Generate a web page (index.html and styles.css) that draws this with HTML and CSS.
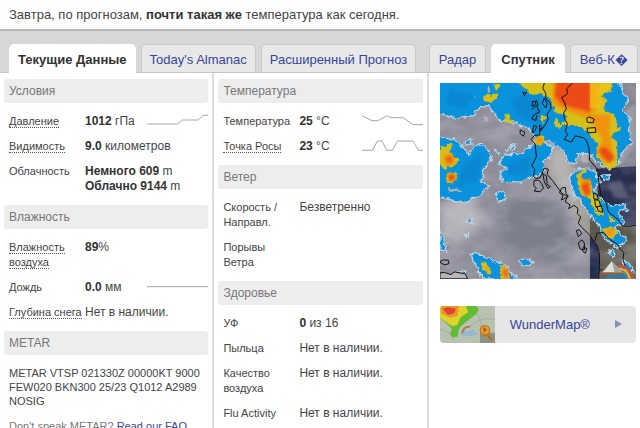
FILE: index.html
```html
<!DOCTYPE html>
<html lang="ru">
  <head>
    <meta charset="UTF-8" />
    <meta name="viewport" content="width=device-width, initial-scale=1.0" />
    <title>Погода</title>
    <link rel="stylesheet" href="styles.css">
  </head>
  <body>
    <p class="summary">Завтра, по прогнозам, <b>почти такая же</b> температура как сегодня.</p>

    <div class="weather">
      <!-- Текущие данные -->
      <section class="main">
        <nav class="tabs">
          <a href="#current" class="tab active">Текущие Данные</a>
          <a href="#almanac" class="tab">Today's Almanac</a>
          <a href="#forecast" class="tab">Расширенный Прогноз</a>
        </nav>

        <div class="columns" id="current">
          <div class="column">
            <h2>Условия</h2>
            <table>
              <tr>
                <th><span class="term">Давление</span></th>
                <td><b>1012</b> гПа</td>
                <td class="chart"><svg class="spark" viewBox="0 0 184 36"><path d="M0 30H92L107 18H154L169 4H184" /></svg></td>
              </tr>
              <tr>
                <th><span class="term">Видимость</span></th>
                <td colspan="2"><b>9.0</b> километров</td>
              </tr>
              <tr>
                <th>Облачность</th>
                <td colspan="2"><b>Немного 609</b> m<br><b>Облачно 9144</b> m</td>
              </tr>
            </table>

            <h2>Влажность</h2>
            <table>
              <tr>
                <th><span class="term">Влажность<br>воздуха</span></th>
                <td><b>89</b>%</td>
                <td class="chart"></td>
              </tr>
              <tr>
                <th>Дождь</th>
                <td><b>0.0</b> мм</td>
                <td class="chart"><svg class="spark" viewBox="0 0 184 36"><path d="M0 20H184" /></svg></td>
              </tr>
              <tr>
                <th><span class="term">Глубина снега</span></th>
                <td colspan="2">Нет в наличии.</td>
              </tr>
            </table>

            <h2>METAR</h2>
            <p class="metar">METAR VTSP 021330Z 00000KT 9000 FEW020 BKN300 25/23 Q1012 A2989 NOSIG</p>
            <p class="faq">Don't speak METAR? <a href="#faq">Read our FAQ</a></p>
          </div>

          <div class="column">
            <h2>Температура</h2>
            <table>
              <tr>
                <th>Температура</th>
                <td><b>25</b> °C</td>
                <td class="chart"><svg class="spark" viewBox="0 0 184 36"><path d="M0 5L30 20H48L76 5L88 11H124L154 32H184" /></svg></td>
              </tr>
              <tr>
                <th><span class="term">Точка Росы</span></th>
                <td><b>23</b> °C</td>
                <td class="chart"><svg class="spark" viewBox="0 0 184 36"><path d="M0 34H32L46 6H60L75 34H92L107 6H154L170 34H184" /></svg></td>
              </tr>
            </table>

            <h2>Ветер</h2>
            <table>
              <tr>
                <th>Скорость /<br>Направл.</th>
                <td colspan="2">Безветренно</td>
              </tr>
              <tr>
                <th>Порывы<br>Ветра</th>
                <td></td>
                <td class="chart"></td>
              </tr>
            </table>

            <h2>Здоровье</h2>
            <table>
              <tr>
                <th>УФ</th>
                <td><b>0</b> из 16</td>
                <td class="chart"></td>
              </tr>
              <tr>
                <th>Пыльца</th>
                <td colspan="2">Нет в наличии.</td>
              </tr>
              <tr>
                <th>Качество<br>воздуха</th>
                <td colspan="2">Нет в наличии.</td>
              </tr>
              <tr>
                <th>Flu Activity</th>
                <td colspan="2">Нет в наличии.</td>
              </tr>
            </table>
          </div>
        </div>
      </section>

      <!-- Карты -->
      <section class="side">
        <nav class="tabs">
          <a href="#radar" class="tab">Радар</a>
          <a href="#satellite" class="tab active">Спутник</a>
          <a href="#webcam" class="tab">Веб-К&#xFFFD;</a>
        </nav>

        <div class="maps" id="satellite">
          <svg class="satellite" viewBox="11 10 590 589" role="img" aria-label="Спутник">
            <defs>
              <filter id="rough" x="-5%" y="-5%" width="110%" height="110%" color-interpolation-filters="sRGB">
                <feTurbulence type="fractalNoise" baseFrequency="0.06" numOctaves="2" seed="4" />
                <feDisplacementMap in="SourceGraphic" scale="20" xChannelSelector="R" yChannelSelector="G" />
              </filter>
              <filter id="haze" x="0" y="0" width="100%" height="100%">
                <feTurbulence type="fractalNoise" baseFrequency="0.009 0.016" numOctaves="4" seed="8" />
                <feColorMatrix values="0 0 0 0 0.86  0 0 0 0 0.86  0 0 0 0 0.88  2.4 0 0 0 -1" />
              </filter>
              <filter id="soft"><feGaussianBlur stdDeviation="14" /></filter>
              <filter id="glow"><feGaussianBlur stdDeviation="4" /></filter>
            </defs>

            <!-- Море, суша и облачность -->
            <rect x="11" y="10" width="590" height="589" fill="#8e8e9b" />
            <g filter="url(#soft)">
              <path fill="#7e7f8d" d="M180 370L340 340L430 470L400 560L200 500Z" />
              <path fill="#b6b4b0" d="M330 270L360 180L400 240L420 300L460 400V470L400 360Z" />
              <path fill="#b2b1b8" d="M11 380L110 350L140 440L60 500L11 470Z" />
            </g>
            <path fill="#9c9a92" d="M395 375L462 345V475L430 445Z" opacity=".7" />
            <path fill="#838491" d="M462 10H601V290H462Z" />
            <path fill="#292f4f" d="M480 268L601 260V440L540 437L490 390Z" />
            <path fill="#5b5950" d="M462 375L500 405L560 440L601 435V599H488V520L462 478Z" />
            <path fill="#252d50" d="M462 474L483 498L491 530L488 599H462Z" />
            <rect x="11" y="10" width="590" height="589" filter="url(#haze)" opacity=".26" />
            <path fill="#9a9ba6" d="M560 100L601 70V190L555 260L545 240L575 170Z" filter="url(#glow)" />
            <path fill="#6a6d83" d="M515 315L555 300L580 360L535 350Z" filter="url(#glow)" opacity=".6" />

            <!-- Холодные облака -->
            <g filter="url(#rough)" fill="#0993dc" stroke="#c3d3e2" stroke-width="4">
              <path d="M0 0H545L560 35L575 60L560 95L583 115L578 150L588 190L565 210L545 258L515 267L480 245L462 228L428 222L424 250L400 255L385 215L340 182L320 190L355 205L325 250L327 275L300 290L250 308L200 305L192 280L212 268L190 250L205 228L255 220L282 200L295 188L292 168L278 144L235 132L190 120L150 78L130 82L112 105L60 118L0 102Z" />
              <path d="M0 175L50 178L80 200L95 225L125 192L155 210L168 240L145 268L135 300L158 320L128 352L80 370L0 350Z" />
              <path d="M400 295L415 270L445 265L480 275L490 310L470 325L495 360L525 380L560 375L575 388L545 400L565 430L535 445L575 485L545 505L500 475L490 442L462 408L435 365L415 350Z" />
              <path d="M85 185L103 178L107 193L90 198ZM172 213L192 214L186 226ZM205 212L216 205L214 218ZM222 202L240 196L231 210ZM178 345L200 336L210 356L190 368ZM92 425L110 415L106 432ZM82 462L97 458L93 473ZM11 455L26 480L31 518L11 510Z" />
              <path d="M104 522L132 525L152 540L192 550L211 560L240 599H140L119 558ZM250 546L268 537L290 552L275 560L258 556ZM62 576L88 572L90 588ZM498 287L520 286L520 301L503 299ZM519 513L532 507L538 531L526 534ZM562 545L583 555L595 580L570 575Z" />
            </g>
            <g filter="url(#rough)" fill="#b0b0b4">
              <path d="M158 20L164 18L164 38L157 36ZM142 112L154 109L157 122L146 124ZM431 226L455 228L461 250L442 248ZM35 326L72 332L68 338L38 339ZM114 50L119 50L119 56Z" />
            </g>
            <g filter="url(#glow)" fill="#0876c3" opacity=".4">
              <path d="M40 28L115 45L85 85L28 72ZM225 55L310 35L320 145L245 105ZM80 260L140 220L125 300L60 325ZM215 255L280 230L277 290L220 285Z" />
            </g>

            <!-- Осадки: от слабых к сильным -->
            <g filter="url(#rough)" fill="#d8bf18">
              <path d="M235 0H535L525 30L495 48L510 68L505 88L535 105L548 143L555 150L530 160L545 220L543 262L515 267L480 232L488 200L460 165L435 143L370 135L395 112L355 97L346 63L325 46L280 38Z" />
              <path d="M137 50L155 38L165 48L185 40L186 60L165 70L148 66ZM168 14L192 13L198 22L180 30ZM203 105L216 103L232 127L216 130L204 124ZM316 105L333 110L325 128L312 122ZM354 126L366 120L380 142L363 145Z" />
              <path d="M11 200L28 202L40 188L48 194L42 220L66 242L60 258L22 268L11 250ZM27 282L58 280L64 298L43 311L29 301Z" />
              <path d="M426 278L444 268L457 276L443 286L445 300L464 306L470 340L493 366L505 410L475 400L465 365L436 346L421 310Z" />
              <path d="M500 450L524 441L544 460L531 483L508 471ZM513 402L540 425L525 430ZM135 547L150 550L166 580L157 586L142 570ZM191 562L210 560L226 599H197ZM294 178L318 168L328 184L315 198L295 195Z" />
            </g>
            <g filter="url(#glow)" fill="#f0920f">
              <path d="M350 0H500L480 48L495 64L478 90L450 115L385 90L350 75ZM452 105L525 105L520 150L535 240L508 250L482 222L500 180Z" />
              <path d="M20 228L48 223L57 250L30 260ZM428 283L436 318L460 354L464 300ZM504 452L527 447L536 462L521 474ZM195 567L211 564L219 599H202ZM143 558L157 565L160 580ZM296 176L319 172L322 190L304 195Z" />
            </g>
            <g filter="url(#glow)" fill="#ec4c13">
              <path d="M362 0H462V98L420 86L380 76L356 50ZM488 208L510 203L536 235L520 250L498 228ZM26 238L43 230L47 252ZM33 287L52 283L58 300L40 306ZM434 320L456 308L463 340L449 352ZM200 576L211 573L214 597Z" />
            </g>
            <path fill="#f3c417" opacity=".65" d="M462 10H530L518 30L490 48L500 66L492 86L462 85Z" />
            <ellipse cx="449" cy="290" rx="12" ry="10" fill="#0993dc" />

            <!-- Береговая линия -->
            <g class="coast">
              <path d="M325 10L320 25L329 41L330 59L342 69L345 86L333 103L336 120L324 142L310 151L311 166L295 168L285 180L297 194L301 232L287 258L296 270L292 291L299 297L312 295L324 266L337 270L333 285L350 304L362 321L379 343L395 351L387 367L402 376L398 388L414 378L426 387L424 403L434 413L427 432L438 445L462 468L470 481L483 498L490 520L491 560L488 599" />
              <path d="M410 10L392 27L395 42L377 54L386 70L391 87L383 100L385 116L394 132L388 155L395 166L384 179L406 188L418 169L442 175L451 182L459 205L461 242L485 270L489 310L495 345L511 371L517 397L549 423L560 440L580 441L601 437" />
              <path d="M477 485L483 462L503 459L522 482L545 495L553 510L564 520L561 542L568 560L557 577M488 575L500 570M12 546L22 542L36 543L38 553L26 557L14 552Z" />
              <path fill="#b5b5b5" d="M11 581L25 580L44 586L54 578L87 584L94 599H11Z" />
              <path d="M260 38H271L265 48ZM252 151L266 158L262 170L252 162ZM289 66L300 65L296 76L288 80ZM301 62L306 75L294 83L287 90M302 79L310 98L294 105L287 118L299 123L302 107M324 55L333 71L330 85L319 72ZM293 138L302 140L298 152L288 160ZM310 136L320 145L311 157Z" />
              <path d="M452 116L460 112L475 119L471 130L454 128ZM453 146L478 144L480 158L456 160ZM294 303L307 302L317 313L322 326L312 337L294 335L301 326L293 319ZM320 282L331 290L333 315L343 322L336 327L325 308ZM377 326L388 324L390 342L397 351L376 362L381 348L370 340Z" />
              <path d="M473 342L484 345L487 360L474 359ZM476 361L489 363L494 379L480 384ZM483 382L497 380L500 399L487 395ZM421 454L430 451L437 463L427 472ZM427 491L438 482L445 491L446 512L432 509ZM442 502L453 509L448 522L440 516Z" />
            </g>

            <!-- Логотип -->
            <path fill="none" stroke="#c9512f" stroke-width="7" d="M536 571C550 554 580 561 590 595" />
            <path fill="none" stroke="#e9ab40" stroke-width="7" d="M534 579C551 562 574 568 582 599" />
            <path fill="none" stroke="#3a9c9c" stroke-width="7" d="M533 587C550 571 568 577 574 599" />
            <path fill="#dddfd5" d="M498 580C510 571 514 560 528 546C539 560 550 564 559 580Z" />
            <path fill="#9aa39e" d="M528 546C539 560 550 564 559 580H536Z" />
            <path fill="#b4532c" d="M498 580H559L565 585H500Z" />
            <path fill="#287fa1" d="M511 586H573V596H511Z" />
          </svg>

          <a href="#wundermap" class="wundermap">
            <svg class="thumb" viewBox="0 0 165 111" preserveAspectRatio="xMidYMid slice" aria-hidden="true">
              <rect width="165" height="111" fill="#b8c2b1" />
              <path fill="none" stroke="#a3ae9d" stroke-width="3" d="M0 70Q30 70 45 111M85 65Q120 30 165 40M100 0L125 50L120 111" />
              <path fill="#63bb32" d="M0 0H109L116 11L108 25L86 42L62 61L55 74L54 91L38 95L30 82L36 69L24 57L0 36Z" />
              <path fill="#e0d32e" d="M0 0H78L84 19L62 34L52 57L37 61L0 35Z" />
              <path fill="#ed962e" d="M0 0H57L52 30L30 35L4 23Z" />
              <path fill="#d8462b" d="M8 8L24 4L48 8L42 22L24 27Z" />
              <path fill="#94b8ce" d="M62 76L74 71L84 78L98 70L117 83L101 89H65Z" />
              <path fill="none" stroke="#bd7547" stroke-width="5" d="M66 82Q70 60 91 62" />
              <path fill="#8c9281" d="M120 80H165V111H120Z" />
              <path stroke="#b17126" stroke-width="6" d="M139 84L157 103M146 98L151 91" />
              <circle cx="135" cy="73" r="14" fill="#e99d2b" stroke="#c47117" stroke-width="4" />
              <path fill="#a65f19" d="M129 64L141 70L132 81Z" />
            </svg>
            <span class="name">WunderMap®</span>
            <svg class="arrow" viewBox="0 0 7 8" aria-hidden="true"><path d="M0 0L7 4L0 8Z" /></svg>
          </a>
        </div>
      </section>
    </div>
  </body>
</html>
```

FILE: styles.css
```css
* {
  box-sizing: border-box;
}

body {
  margin: 0;
  height: 100vh;
  overflow: hidden;
  background-color: #fff;
  color: #444;
  font-family: "Liberation Sans", Arial, sans-serif;
  font-size: 12px;
  line-height: 15px;
}

a {
  color: #36459b;
  text-decoration: none;
}

/* Строка с прогнозом на завтра */
.summary {
  margin: 0;
  padding: 7px 9px;
  font-size: 13px;
}

.summary b {
  color: #333;
}

.weather {
  display: grid;
  grid-template-columns: 67% 33%;
}

/* Вкладки */
.tabs {
  display: flex;
  gap: 5px;
  height: 44px;
  padding: 13px 9px 0;
  border-top: 2px solid #bababa;
  border-bottom: 1px solid #c6c6c6;
  background-color: #d7d7d7;
}

.side .tabs {
  padding: 13px 0 0;
}

.tab {
  padding: 7px 8px 0;
  border: 1px solid #c9c9c9;
  border-bottom: none;
  border-radius: 5px 5px 0 0;
  background-color: #e8e8e8;
  font-size: 13px;
  white-space: nowrap;
}

.side .tab {
  padding: 7px 9px 0;
}

.tab.active {
  margin-bottom: -1px;
  border-color: #fff;
  background-color: #fff;
  color: #333;
  font-weight: bold;
}

/* Колонки с данными */
.columns {
  display: grid;
  grid-template-columns: 1fr 1fr;
}

.column {
  padding: 6px 4px 0;
  border-right: 2px solid #ddd;
}

h2 {
  margin: 0 0 6px;
  padding: 5px;
  border-radius: 3px;
  background-color: #ededed;
  color: #777;
  font-size: 12px;
  font-weight: normal;
  line-height: 14px;
}

table {
  width: 100%;
  margin-bottom: 6px;
  border-collapse: collapse;
  table-layout: fixed;
}

th,
td {
  padding: 5px 0;
  text-align: left;
  vertical-align: top;
}

th {
  width: 81px;
  padding-left: 5px;
  font-size: 11px;
  font-weight: normal;
  white-space: nowrap;
}

.chart {
  width: 61px;
}

b {
  color: #333;
}

.term {
  border-bottom: 1px dotted #555;
}

.spark {
  display: block;
  width: 100%;
  height: 12px;
}

.spark path {
  fill: none;
  stroke: #a5a5a5;
  stroke-width: 3;
}

.metar,
.faq {
  margin: 11px 0;
  padding-left: 5px;
  font-size: 11px;
  line-height: 14px;
}

.faq {
  color: #777;
}

/* Карты */
.maps {
  padding: 10px 4px 0 11px;
}

.satellite {
  display: block;
  width: 100%;
}

.coast {
  fill: none;
  stroke: #111;
  stroke-width: 3;
  stroke-linejoin: round;
}

.wundermap {
  display: flex;
  align-items: center;
  height: 37px;
  margin-top: 27px;
  padding-right: 14px;
  overflow: hidden;
  border-radius: 4px;
  background-color: #e6e6e6;
  font-size: 13px;
}

.thumb {
  width: 55px;
  height: 37px;
}

.name {
  flex: 1;
  padding-left: 15px;
}

.arrow {
  width: 7px;
  height: 8px;
  fill: #858fb8;
}
```
